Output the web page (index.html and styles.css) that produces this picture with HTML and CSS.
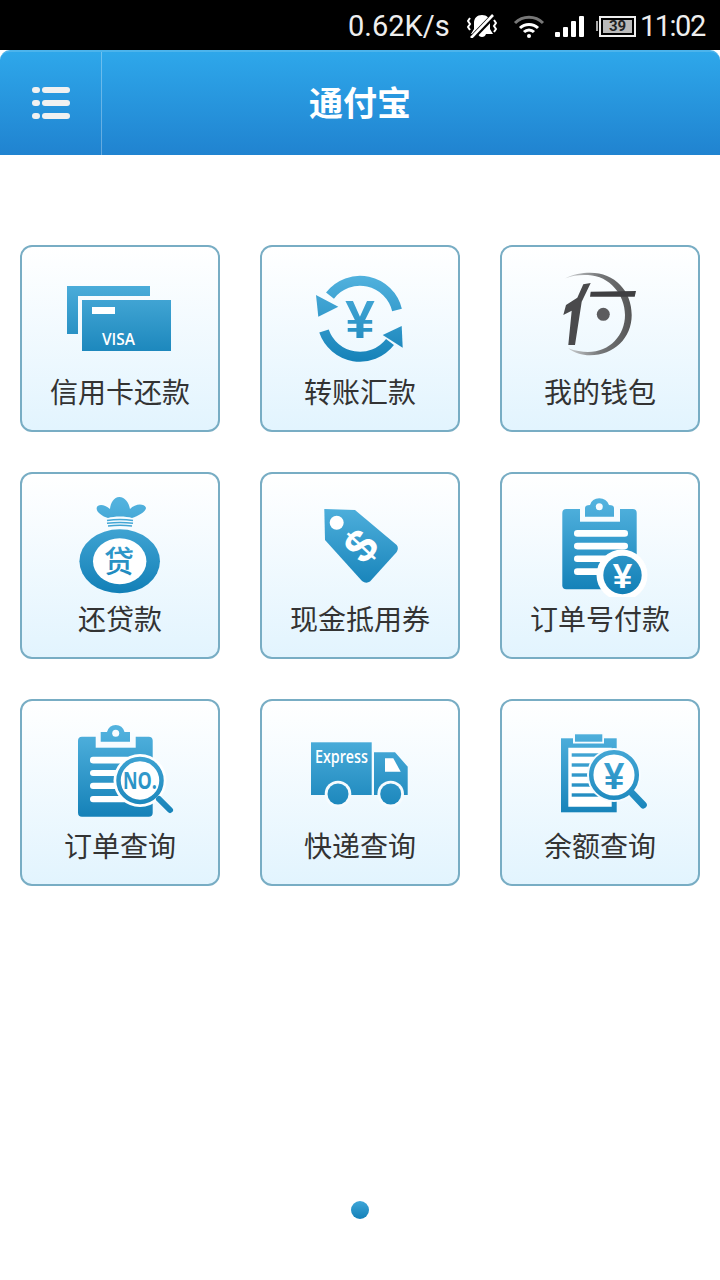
FILE: index.html
```html
<!DOCTYPE html>
<html lang="zh-CN">

<head>
  <meta charset="UTF-8">
  <meta name="viewport" content="width=device-width, initial-scale=1.0">
  <title>通付宝</title>
  <link rel="stylesheet" href="styles.css">
</head>

<body>
  <svg class="defs" width="0" height="0" aria-hidden="true">
    <defs>
      <linearGradient id="ico" gradientUnits="userSpaceOnUse" x1="0" y1="10" x2="0" y2="100">
        <stop offset="0" stop-color="#52b2de"></stop>
        <stop offset="1" stop-color="#1380b7"></stop>
      </linearGradient>
      <linearGradient id="logo" gradientUnits="userSpaceOnUse" x1="25" y1="0" x2="92" y2="0">
        <stop offset="0" stop-color="#d5d8da"></stop>
        <stop offset="0.5" stop-color="#77797b"></stop>
        <stop offset="1" stop-color="#555"></stop>
      </linearGradient>
    </defs>
  </svg>

  <div class="statusbar">
    <span class="speed">0.62K/s</span>
    <svg class="st-mute" width="30" height="24" viewBox="0 0 30 24">
      <path d="M15 1C10 1 7 4 7 9V15L4 20H26L23 15V9C23 4 20 1 15 1Z" fill="#fff"></path>
      <path d="M11 20H19Q18 23 15 23 12 23 11 20Z" fill="#fff"></path>
      <path d="M28 0 5 24" stroke="#000" stroke-width="5.500"></path>
      <path d="M26 1 4 24" stroke="#fff" stroke-width="2.600"></path>
      <path d="M3 4 1 7l2 3-2 3 2 3M27 6l2 3-2 3 2 3-2 3" fill="none" stroke="#fff" stroke-width="2"></path>
    </svg>
    <svg class="st-wifi" width="32" height="24" viewBox="0 0 32 24">
      <path d="M2 9a20 20 0 0 1 28 0" fill="none" stroke="#777" stroke-width="3"></path>
      <path d="M7 14a13 13 0 0 1 18 0M11 18a7 7 0 0 1 10 0" fill="none" stroke="#fff" stroke-width="3"></path>
      <circle cx="16" cy="22" r="2" fill="#fff"></circle>
    </svg>
    <div class="st-signal">
      <i class="bar bar-1"></i>
      <i class="bar bar-2"></i>
      <i class="bar bar-3"></i>
      <i class="bar bar-4"></i>
    </div>
    <div class="st-battery">
      <i class="nub"></i>
      <div class="cell"><span>39</span></div>
    </div>
    <span class="clock">11:02</span>
  </div>

  <header class="titlebar">
    <button class="menu-btn">
      <svg width="38" height="32" viewBox="0 0 38 32" fill="#f1f1f1">
        <rect x="0" y="0" width="8" height="6" rx="3"></rect>
        <rect x="10" y="0" width="28" height="6" rx="3"></rect>
        <rect x="0" y="13" width="8" height="6" rx="3"></rect>
        <rect x="10" y="13" width="28" height="6" rx="3"></rect>
        <rect x="0" y="26" width="8" height="6" rx="3"></rect>
        <rect x="10" y="26" width="28" height="6" rx="3"></rect>
      </svg>
    </button>
    <h1>通付宝</h1>
  </header>

  <main class="grid">
    <a class="tile">
      <svg class="icon" viewBox="0 0 120 105" fill="url(#ico)">
        <path d="M7 21H90V31H18V69H7Z"></path>
        <rect x="22" y="35" width="89" height="51"></rect>
        <rect x="32" y="42" width="23" height="7" fill="#fff"></rect>
        <text class="ic-text visa" x="42" y="80" textLength="33" lengthAdjust="spacingAndGlyphs">VISA</text>
      </svg>
      <span class="label">信用卡还款</span>
    </a>

    <a class="tile">
      <svg class="icon" viewBox="0 0 120 105" fill="url(#ico)">
        <path d="M97 45A38 38 0 0 0 30 30.600" fill="none" stroke="url(#ico)" stroke-width="10"></path>
        <path d="M16 30 38.300 41.700 18.300 51.700Z"></path>
        <path d="M24 66A38 38 0 0 0 90 77" fill="none" stroke="url(#ico)" stroke-width="10"></path>
        <path d="M101.700 61 82.700 70 102.700 82.700Z"></path>
        <text class="ic-yen" x="60" y="73" font-size="53" text-anchor="middle">¥</text>
      </svg>
      <span class="label">转账汇款</span>
    </a>

    <a class="tile">
      <svg class="icon" viewBox="0 0 120 105">
        <path fill="url(#logo)" d="M25 13.500C33 9 42 7.700 50 7.700 75 7.700 91.700 26 91.700 50 91.700 73 74 90.300 50 90.300 42 90.300 34 88 28.300 83.300 35 86 42 87 48 87 70 87 85 70 85 50 85 30 70 11 48 10 40 9.500 32 10.500 25 13.500Z"></path>
        <path fill="#4a4a4c" d="M50.700 18 43.300 19.300 37.300 32.700 26 40 23.300 50 31.700 45.700 28.300 80H35L41.700 36.700Z"></path>
        <path fill="#3f3f41" d="M50.700 26.700 96 26 94.700 31.700H50Z"></path>
        <circle cx="63.300" cy="49.300" r="6.500" fill="#5c5c5e"></circle>
      </svg>
      <span class="label">我的钱包</span>
    </a>

    <a class="tile">
      <svg class="icon" viewBox="0 0 120 105" fill="url(#ico)">
        <path d="M48 26C42 24 36 20 36.700 15.700 37.500 12 44 11.500 50 17 50.500 11 54 5 59.300 5 65 5 69 11 70 17 75 11.500 84 11 86 15.700 86 20 78 24 72 26 66 24 54 24 48 26Z"></path>
        <path d="M47 28.500Q60 26.500 73 28.500M47 31.300Q60 29.500 73 31.300M48 34Q60 32.500 72 34" fill="none" stroke="url(#ico)" stroke-width="1.500"></path>
        <ellipse cx="59.700" cy="69.300" rx="40.300" ry="32"></ellipse>
        <ellipse cx="59.700" cy="69.300" rx="26.700" ry="23" fill="#fff"></ellipse>
        <text class="ic-cjk" x="59" y="79.500" font-size="30" text-anchor="middle">贷</text>
      </svg>
      <span class="label">还贷款</span>
    </a>

    <a class="tile">
      <svg class="icon" viewBox="0 0 120 105" fill="url(#ico)">
        <path d="M24.300 17 55 18 96.700 53Q99 56 96.700 60L70 89.500Q66 92 62 89L25 48Z"></path>
        <circle cx="36.700" cy="30.700" r="7" fill="#fff"></circle>
        <text class="ic-dollar" x="60" y="70" font-size="46" text-anchor="middle" transform="rotate(-47 60 53)">$</text>
      </svg>
      <span class="label">现金抵用券</span>
    </a>

    <a class="tile">
      <svg class="icon" viewBox="0 0 120 105" fill="url(#ico)">
        <rect x="22.300" y="17" width="74.400" height="80.300" rx="4"></rect>
        <rect x="40" y="14" width="40" height="15.700" fill="#f7fcff"></rect>
        <path d="M45 24.700V16Q45 13 50 13 52 6.300 59.300 6.300 66.500 6.300 69 13 74 13 74 16V24.700Z"></path>
        <circle cx="59.300" cy="14.700" r="3.500" fill="#f7fcff"></circle>
        <g fill="#fff">
          <rect x="34" y="38" width="54" height="6.700" rx="3.300"></rect>
          <rect x="34" y="50.700" width="54" height="6.700" rx="3.300"></rect>
          <rect x="34" y="63.500" width="54" height="6.500" rx="3.200"></rect>
          <rect x="34" y="76.300" width="54" height="6.700" rx="3.300"></rect>
          <circle cx="82" cy="83" r="25.500"></circle>
        </g>
        <circle cx="82.500" cy="83" r="19.200"></circle>
        <text class="ic-yen" x="82.500" y="96" font-size="35" text-anchor="middle" fill="#fff">¥</text>
      </svg>
      <span class="label">订单号付款</span>
    </a>

    <a class="tile">
      <svg class="icon" viewBox="0 0 120 105" fill="url(#ico)">
        <rect x="18" y="17.700" width="74.700" height="80" rx="4"></rect>
        <rect x="35.700" y="14" width="40" height="14.700" fill="#f8fcff"></rect>
        <path d="M40.700 22.700V13H47Q49 6 55.700 6 62.500 6 64.500 13H70V22.700Z"></path>
        <circle cx="55.700" cy="14.300" r="3.500" fill="#f8fcff"></circle>
        <g fill="#fff">
          <rect x="30" y="37.700" width="50" height="6.700" rx="3"></rect>
          <rect x="30" y="51" width="50" height="6" rx="3"></rect>
          <rect x="30" y="63.700" width="50" height="6.300" rx="3"></rect>
          <rect x="30" y="77" width="50" height="6.300" rx="3"></rect>
          <circle cx="80" cy="61.500" r="26.500"></circle>
        </g>
        <circle cx="80" cy="61.500" r="21.500" fill="#fff" stroke="url(#ico)" stroke-width="4.500"></circle>
        <path d="M99 80 110 91" fill="none" stroke="url(#ico)" stroke-width="6" stroke-linecap="round"></path>
        <text class="ic-no" x="80" y="70" font-size="24" text-anchor="middle" textLength="34" lengthAdjust="spacingAndGlyphs">NO.</text>
      </svg>
      <span class="label">订单查询</span>
    </a>

    <a class="tile">
      <svg class="icon" viewBox="0 0 120 105" fill="url(#ico)">
        <rect x="11" y="23.300" width="60.700" height="52.700"></rect>
        <path d="M74 33.300H95L107.700 47.700V76H74Z"></path>
        <path d="M85 39.300H93.300L100.700 52.700H85Z" fill="#fff"></path>
        <g fill="#f6fbfe">
          <circle cx="38" cy="75" r="13.300"></circle>
          <circle cx="90.700" cy="75" r="13.300"></circle>
        </g>
        <circle cx="38" cy="75" r="10.500"></circle>
        <circle cx="90.700" cy="75" r="10.500"></circle>
        <text class="ic-text express" x="15" y="43.500" textLength="53" lengthAdjust="spacingAndGlyphs">Express</text>
      </svg>
      <span class="label">快递查询</span>
    </a>

    <a class="tile">
      <svg class="icon" viewBox="0 0 120 105" fill="url(#ico)">
        <rect x="21" y="19.300" width="55.700" height="74"></rect>
        <rect x="33" y="13.500" width="31" height="11" fill="#f7fcff"></rect>
        <rect x="35" y="15.300" width="27.300" height="7.400"></rect>
        <path d="M28.300 28.700H71.700V87.700H28.300Z" fill="#fff"></path>
        <rect x="31.700" y="34.300" width="36" height="3.400"></rect>
        <rect x="31.700" y="44.300" width="36" height="3.400"></rect>
        <rect x="31.700" y="54.300" width="20" height="3.400"></rect>
        <rect x="31.700" y="64.300" width="20" height="3.400"></rect>
        <rect x="31.700" y="74.300" width="30" height="3.400"></rect>
        <circle cx="74" cy="56" r="27" fill="#f7fcff"></circle>
        <circle cx="74" cy="56" r="22.800" fill="#fff" stroke="url(#ico)" stroke-width="4.500"></circle>
        <path d="M92.300 74.300 103.300 86" fill="none" stroke="url(#ico)" stroke-width="7" stroke-linecap="round"></path>
        <text class="ic-yen" x="74" y="70" font-size="37" text-anchor="middle">¥</text>
      </svg>
      <span class="label">余额查询</span>
    </a>
  </main>

  <div class="pager"><i class="dot"></i></div>
</body>

</html>
```

FILE: styles.css
```css
:root {
  --black: #000;
  --tile-border: #78adc4;
  --text: #333;
}

html,
body {
  margin: 0;
  background: #fff;
}

body {
  font-family: "Noto Sans CJK SC", sans-serif;
  color: var(--text);
  inline-size: 720px;
  min-block-size: 1280px;
}

.defs {
  display: block;
}

/* status bar */
.statusbar {
  display: flex;
  align-items: center;
  block-size: 50px;
  padding-inline: 348px 12px;
  padding-block-start: 2px;
  box-sizing: border-box;
  background: var(--black);
  color: #eee;
  font-family: Roboto, sans-serif;
  font-size: 29px;
}

.statusbar > * {
  flex: none;
}

.speed {
  inline-size: 119px;
}

.clock {
  letter-spacing: -1.500px;
}

.st-mute {
  margin-inline-end: 16px;
}

.st-wifi {
  margin-inline-end: 10px;
}

.st-signal {
  display: flex;
  align-items: flex-end;
  gap: 3px;
  block-size: 21px;
  margin-inline-end: 12px;
}

.bar {
  inline-size: 5px;
  background: #fff;
  border-radius: 1px;
}

.bar-1 {
  block-size: 5px;
}

.bar-2 {
  block-size: 10px;
}

.bar-3 {
  block-size: 16px;
}

.bar-4 {
  block-size: 21px;
}

.st-battery {
  display: flex;
  align-items: center;
  inline-size: 44px;
}

.nub {
  inline-size: 2px;
  block-size: 10px;
  background: #aaa;
  margin-inline-end: 1px;
}

.cell {
  box-sizing: border-box;
  inline-size: 37px;
  block-size: 21px;
  border: 2px solid #eee;
  padding: 2px;
  display: flex;
}

.cell span {
  flex: 1;
  background: #b9b9b9;
  color: #222;
  font-size: 15px;
  font-weight: 700;
  line-height: 13px;
  text-align: center;
}

/* title bar */
.titlebar {
  display: grid;
  grid-template-columns: 102px 1fr 102px;
  align-items: stretch;
  block-size: 105px;
  box-sizing: border-box;
  border-radius: 10px 10px 0 0;
  border-block-start: 2px solid #4cb4ec;
  background: linear-gradient(#2ea7ea, #2083d0);
}

.menu-btn {
  background: transparent;
  border: none;
  border-inline-end: 1px solid rgb(255 255 255 / 30%);
  padding: 0 0 2px;
  display: flex;
  align-items: center;
  justify-content: center;
}

.titlebar h1 {
  margin: 0;
  color: #fff;
  font-size: 34px;
  font-weight: 700;
  line-height: 100px;
  text-align: center;
}

/* tiles */
.grid {
  display: grid;
  grid-template-columns: repeat(3, 200px);
  grid-auto-rows: 187px;
  gap: 40px;
  padding: 90px 20px 0;
}

.tile {
  box-sizing: border-box;
  display: flex;
  flex-direction: column;
  align-items: center;
  padding-block-start: 18px;
  border: 2px solid var(--tile-border);
  border-radius: 12px;
  background: linear-gradient(#fff, #e2f4fe);
}

.icon {
  display: block;
  inline-size: 120px;
  block-size: 105px;
  flex: none;
}

.label {
  margin-block-start: 1px;
  font-size: 28px;
  line-height: 40px;
  white-space: nowrap;
}

/* text inside the icons */
.ic-text {
  fill: #fff;
  font-family: "Open Sans", sans-serif;
  font-weight: 600;
}

.visa {
  font-size: 16px;
}

.express {
  font-size: 18px;
}

.ic-yen {
  font-family: "Liberation Sans", sans-serif;
  font-weight: 700;
}

.ic-cjk {
  font-family: "Noto Sans CJK SC", sans-serif;
  font-weight: 500;
}

.ic-dollar {
  fill: #fff;
  font-family: "Liberation Sans", sans-serif;
  font-weight: 700;
}

.ic-no {
  font-family: "Open Sans", sans-serif;
  font-weight: 700;
}

/* pager */
.pager {
  display: flex;
  justify-content: center;
  margin-block-start: 315px;
}

.dot {
  inline-size: 18px;
  block-size: 18px;
  border-radius: 50%;
  background: linear-gradient(#3ea6d8, #1480b8);
}
```
